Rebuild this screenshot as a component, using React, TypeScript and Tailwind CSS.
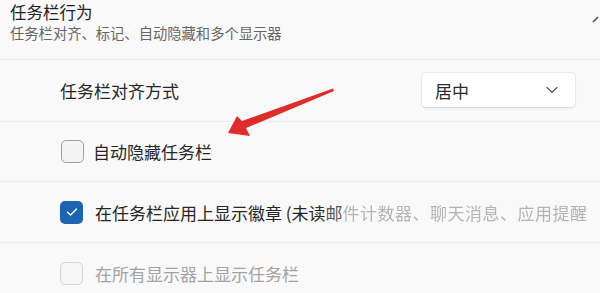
import React from "react";

const font = { fontFamily: '"Noto Sans CJK SC", "Noto Sans", sans-serif' };

function Check() {
  return (
    <svg width="12" height="10" viewBox="0 0 12 10" fill="none">
      <path d="M1.5 5.2 L4.6 8 L10.5 2" stroke="white" strokeWidth="1.4" strokeLinecap="round" strokeLinejoin="round" />
    </svg>
  );
}

export default function App() {
  return (
    <div className="relative w-[600px] h-[293px] overflow-hidden bg-[#f9f9f9] text-[#1c1c1c]" style={font}>
      <div className="flex flex-col">
        {/* header */}
        <div className="h-[60px] pl-[10px] pt-[1px] flex flex-col border-b border-[#e6e6e6]">
          <div className="text-[16.5px] leading-[22px] text-[#222]">任务栏行为</div>
          <div className="text-[14.3px] leading-[20px] text-[#666]">任务栏对齐、标记、自动隐藏和多个显示器</div>
        </div>
        {/* row 1 */}
        <div className="h-[62px] flex items-center pl-[60px] pr-[24px] border-b border-[#ebebeb]">
          <div className="text-[17px] leading-none text-[#262626] mt-[-1px]">任务栏对齐方式</div>
          <div className="ml-auto w-[155px] h-[36px] mt-[-1px] bg-white rounded-[5px] border border-[#e8e8e8] border-b-[#dadada] shadow-[0_1px_2px_rgba(0,0,0,0.04)] flex items-center pl-[13px] pr-[17px]">
            <span className="text-[17px] leading-none text-[#2a2a2a]">居中</span>
            <svg className="ml-auto" width="12" height="8" viewBox="0 0 12 8" fill="none">
              <path d="M1 1.5 L6 6.2 L11 1.5" stroke="#5a5a5a" strokeWidth="1.3" strokeLinecap="round" strokeLinejoin="round" />
            </svg>
          </div>
        </div>
        {/* row 2 */}
        <div className="h-[60px] flex items-center pl-[61px] border-b border-[#ebebeb]">
          <div className="w-[23px] h-[23px] rounded-[5px] border border-[#9e9e9e] bg-[#f3f3f3]" />
          <div className="ml-[9px] text-[17px] leading-none text-[#262626]">自动隐藏任务栏</div>
        </div>
        {/* row 3 */}
        <div className="h-[61px] flex items-center pl-[60px] border-b border-[#ebebeb]">
          <div className="w-[23px] h-[23px] rounded-[5px] bg-[#1c65b3] flex items-center justify-center">
            <Check />
          </div>
          <div className="ml-[12px] text-[17px] leading-none whitespace-nowrap text-[#262626]">
            在任务栏应用上显示徽章 (未读<span className="text-[#555]">邮</span><span className="text-[#b4b4b4] blur-[0.6px] tracking-[0.5px]">件计数器、聊天消息、应用提醒</span>
          </div>
        </div>
        {/* row 4 */}
        <div className="h-[60px] flex items-start pt-[19px] pl-[60px]">
          <div className="w-[23px] h-[23px] rounded-[5px] border border-[#d4d4d4] bg-[#f6f6f6]" />
          <div className="ml-[12px] mt-[3px] text-[17px] leading-none text-[#a3a3a3]">在所有显示器上显示任务栏</div>
        </div>
      </div>
      {/* red annotation arrow */}
      <svg className="absolute left-0 top-0 pointer-events-none" width="600" height="293" viewBox="0 0 600 293">
        <polygon points="228,133 237,116 242,121 333,88.5 334,91 246,128 250,136" fill="#e02b2b" />
        <path d="M593 22 L598 17" stroke="#444" strokeWidth="1.5" />
      </svg>
    </div>
  );
}
